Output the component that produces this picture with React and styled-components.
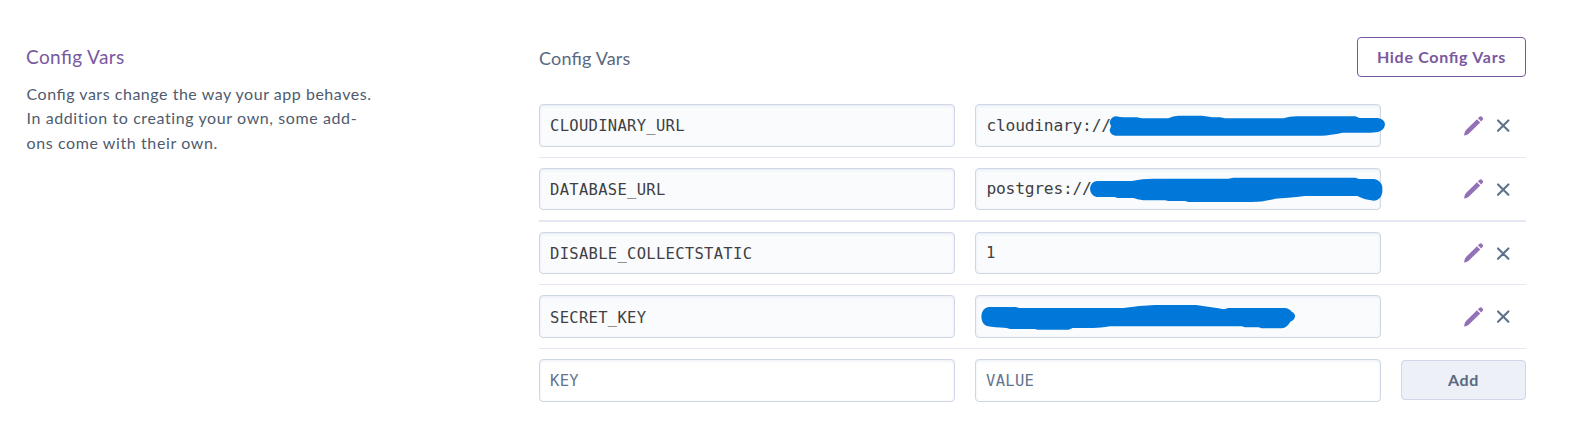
import React from "react";
import styled, { createGlobalStyle } from "styled-components";

const GlobalStyle = createGlobalStyle`
  * { box-sizing: border-box; }
  body {
    margin: 0;
    background: #fff;
    font-family: Lato, "Open Sans", sans-serif;
    font-feature-settings: "liga" 1;
  }
`;

const Page = styled.main`
  display: grid;
  grid-template-columns: 359px 987px;
  column-gap: 153px;
  padding: 37px 0 38px 27px;
`;

const Intro = styled.section`
  padding-top: 8px;
`;

const IntroTitle = styled.h2`
  margin: 0 0 0 -1px;
  font-size: 19px;
  line-height: 24px;
  font-weight: 400;
  letter-spacing: 0.4px;
  color: #79589f;
`;

const IntroText = styled.p`
  margin: 13px 0 0;
  padding-right: 8px;
  font-size: 16px;
  line-height: 24.4px;
  color: #4f5b6e;
`;

const Sentence = styled.span`
  display: block;
  margin-left: -0.5px;
  letter-spacing: ${(p) => (p.$plain ? 0.6 : 0.53)}px;
  font-feature-settings: "liga" ${(p) => (p.$plain ? 0 : 1)};
`;

const Header = styled.header`
  display: flex;
  justify-content: space-between;
  height: 40px;
`;

const HeaderTitle = styled.h3`
  margin: 9px 0 0;
  font-size: 18px;
  line-height: 24px;
  font-weight: 400;
  letter-spacing: 0.18px;
  color: #596981;
`;

const Button = styled.button`
  width: ${(p) => p.$width}px;
  height: 40px;
  margin-bottom: ${(p) => (p.$muted ? 1 : 0)}px;
  padding: 0;
  border: 1px solid ${(p) => (p.$muted ? "#cfd7e6" : "#79589f")};
  border-radius: 4px;
  background: ${(p) => (p.$muted ? "#edf0f6" : "#fff")};
  color: ${(p) => (p.$muted ? "#596981" : "#79589f")};
  font: 700 16px/24px Lato, sans-serif;
  font-feature-settings: "liga" 1;
  letter-spacing: 0.7px;
`;

const List = styled.div`
  padding-top: 17px;
`;

const Row = styled.div`
  display: grid;
  grid-template-columns: 416px 406px 125px;
  column-gap: 20px;
  align-items: center;
  padding: 10px 0;
  border-bottom: ${(p) => p.$line || 0}px solid #e3e8f3;
`;

const Field = styled.div`
  position: relative;
  display: flex;
  align-items: center;
  height: ${(p) => p.$height}px;
  padding: ${(p) => p.$drop || 0}px 10px 0;
  border: 1px solid #cfd7e6;
  border-radius: 4px;
  background: ${(p) => (p.$editable ? "#fff" : "#fafbfd")};
  box-shadow: inset 0 1px 3px rgba(190, 202, 224, 0.35);
  color: ${(p) => (p.$editable ? "#62748e" : "#3f3f44")};
  font-family: "DejaVu Sans Mono", monospace;
  font-size: 15.5px;
  line-height: 20px;
  letter-spacing: 0.3px;
`;

const ValueField = styled(Field)`
  padding-left: ${(p) => (p.$url ? 10.5 : 10)}px;
  font-size: ${(p) => (p.$url ? 16.3 : 15.5)}px;
  letter-spacing: ${(p) => (p.$url ? -0.24 : 0.28)}px;
`;

const Scribble = styled.svg`
  position: absolute;
  left: -1px;
  top: -1px;
  width: 406px;
  height: 43px;
  overflow: visible;
  fill: #0078d9;
`;

const Actions = styled.div`
  display: flex;
  align-items: center;
  gap: 13px;
  padding-left: 63px;
`;

const PencilIcon = () => (
  <svg width="20" height="20" viewBox="0 0 20 20" fill="#9470b8">
    <path d="M0 19.5Q.1 16 2 14L13 3.2 16.2 6.4 5 17.5Q3 19.4 0 19.5Z" />
    <path d="M13.9 2.3 15.3 0.9Q16.6-.1 17.8.8L18.5 1.5Q19.7 2.9 18.5 4.1L17.1 5.5Z" />
  </svg>
);

const CloseIcon = () => (
  <svg width="13" height="13" viewBox="0 0 13 13" fill="none" stroke="#5f718c" strokeWidth="2.1" strokeLinecap="round">
    <path d="M1 1.4 11.4 11.8M11.4 1.4 1 11.8" />
  </svg>
);

const VARS = [
  {
    name: "CLOUDINARY_URL",
    value: "cloudinary://",
    height: 43,
    line: 1,
    drop: 0,
    viewBox: "45 42 1218 129",
    mark: "M449 97Q453 80 468 79Q480 82 492 82H530L545 85H625Q638 77 656 77H726L758 82H780L795 85H970Q990 79 1010 79H1186L1198 84H1253Q1273 86 1275 103Q1274 121 1254 126L1232 128H1148Q1110 136 1085 137H466Q450 134 449 120L453 109Z",
  },
  {
    name: "DATABASE_URL",
    value: "postgres://",
    height: 42,
    line: 2,
    drop: 2,
    viewBox: "45 234 1218 129",
    mark: "M390 297Q392 275 411 273H515Q548 266 580 266H805L820 263H1186L1197 267H1243Q1263 272 1267 290V307Q1263 331 1242 332Q1215 330 1192 318H1035Q980 325 945 326Q905 337 870 336H685L676 333H625L615 331H550Q530 328 520 324H472L464 321H410Q392 317 390 297Z",
  },
  { name: "DISABLE_COLLECTSTATIC", value: "1", height: 42, line: 1, drop: 2 },
  {
    name: "SECRET_KEY",
    value: "",
    height: 43,
    line: 1,
    drop: 2,
    viewBox: "45 225 1218 129",
    mark: "M64 290Q65 264 86 261H167L178 264H490Q540 257 585 255H708L775 265L792 268L805 264H976Q990 267 995 275Q1006 280 1005 290Q1003 300 991 305Q982 323 965 325H905L896 322H855L845 319H450Q420 324 400 324H338L326 329H232L225 327H150L140 324Q100 322 84 319Q65 315 64 290Z",
  },
];

const ConfigRow = ({ item }) => (
  <Row $line={item.line}>
    <Field $height={item.height} $drop={item.drop}>{item.name}</Field>
    <ValueField $height={item.height} $url={Boolean(item.mark)}>
      {item.value}
      {item.mark && (
        <Scribble viewBox={item.viewBox}>
          <path d={item.mark} />
        </Scribble>
      )}
    </ValueField>
    <Actions>
      <PencilIcon />
      <CloseIcon />
    </Actions>
  </Row>
);

export default function App() {
  return (
    <>
      <GlobalStyle />
      <Page>
        <Intro>
          <IntroTitle>Config Vars</IntroTitle>
          <IntroText>
            <Sentence>Config vars change the way your app behaves.</Sentence>
            <Sentence $plain>In addition to creating your own, some add-ons come with their own.</Sentence>
          </IntroText>
        </Intro>
        <section>
          <Header>
            <HeaderTitle>Config Vars</HeaderTitle>
            <Button $width={169}>Hide Config Vars</Button>
          </Header>
          <List>
            {VARS.map((item) => (
              <ConfigRow key={item.name} item={item} />
            ))}
            <Row>
              <Field $height={43} $editable>KEY</Field>
              <Field $height={43} $editable>VALUE</Field>
              <Button $width={125} $muted>Add</Button>
            </Row>
          </List>
        </section>
      </Page>
    </>
  );
}
